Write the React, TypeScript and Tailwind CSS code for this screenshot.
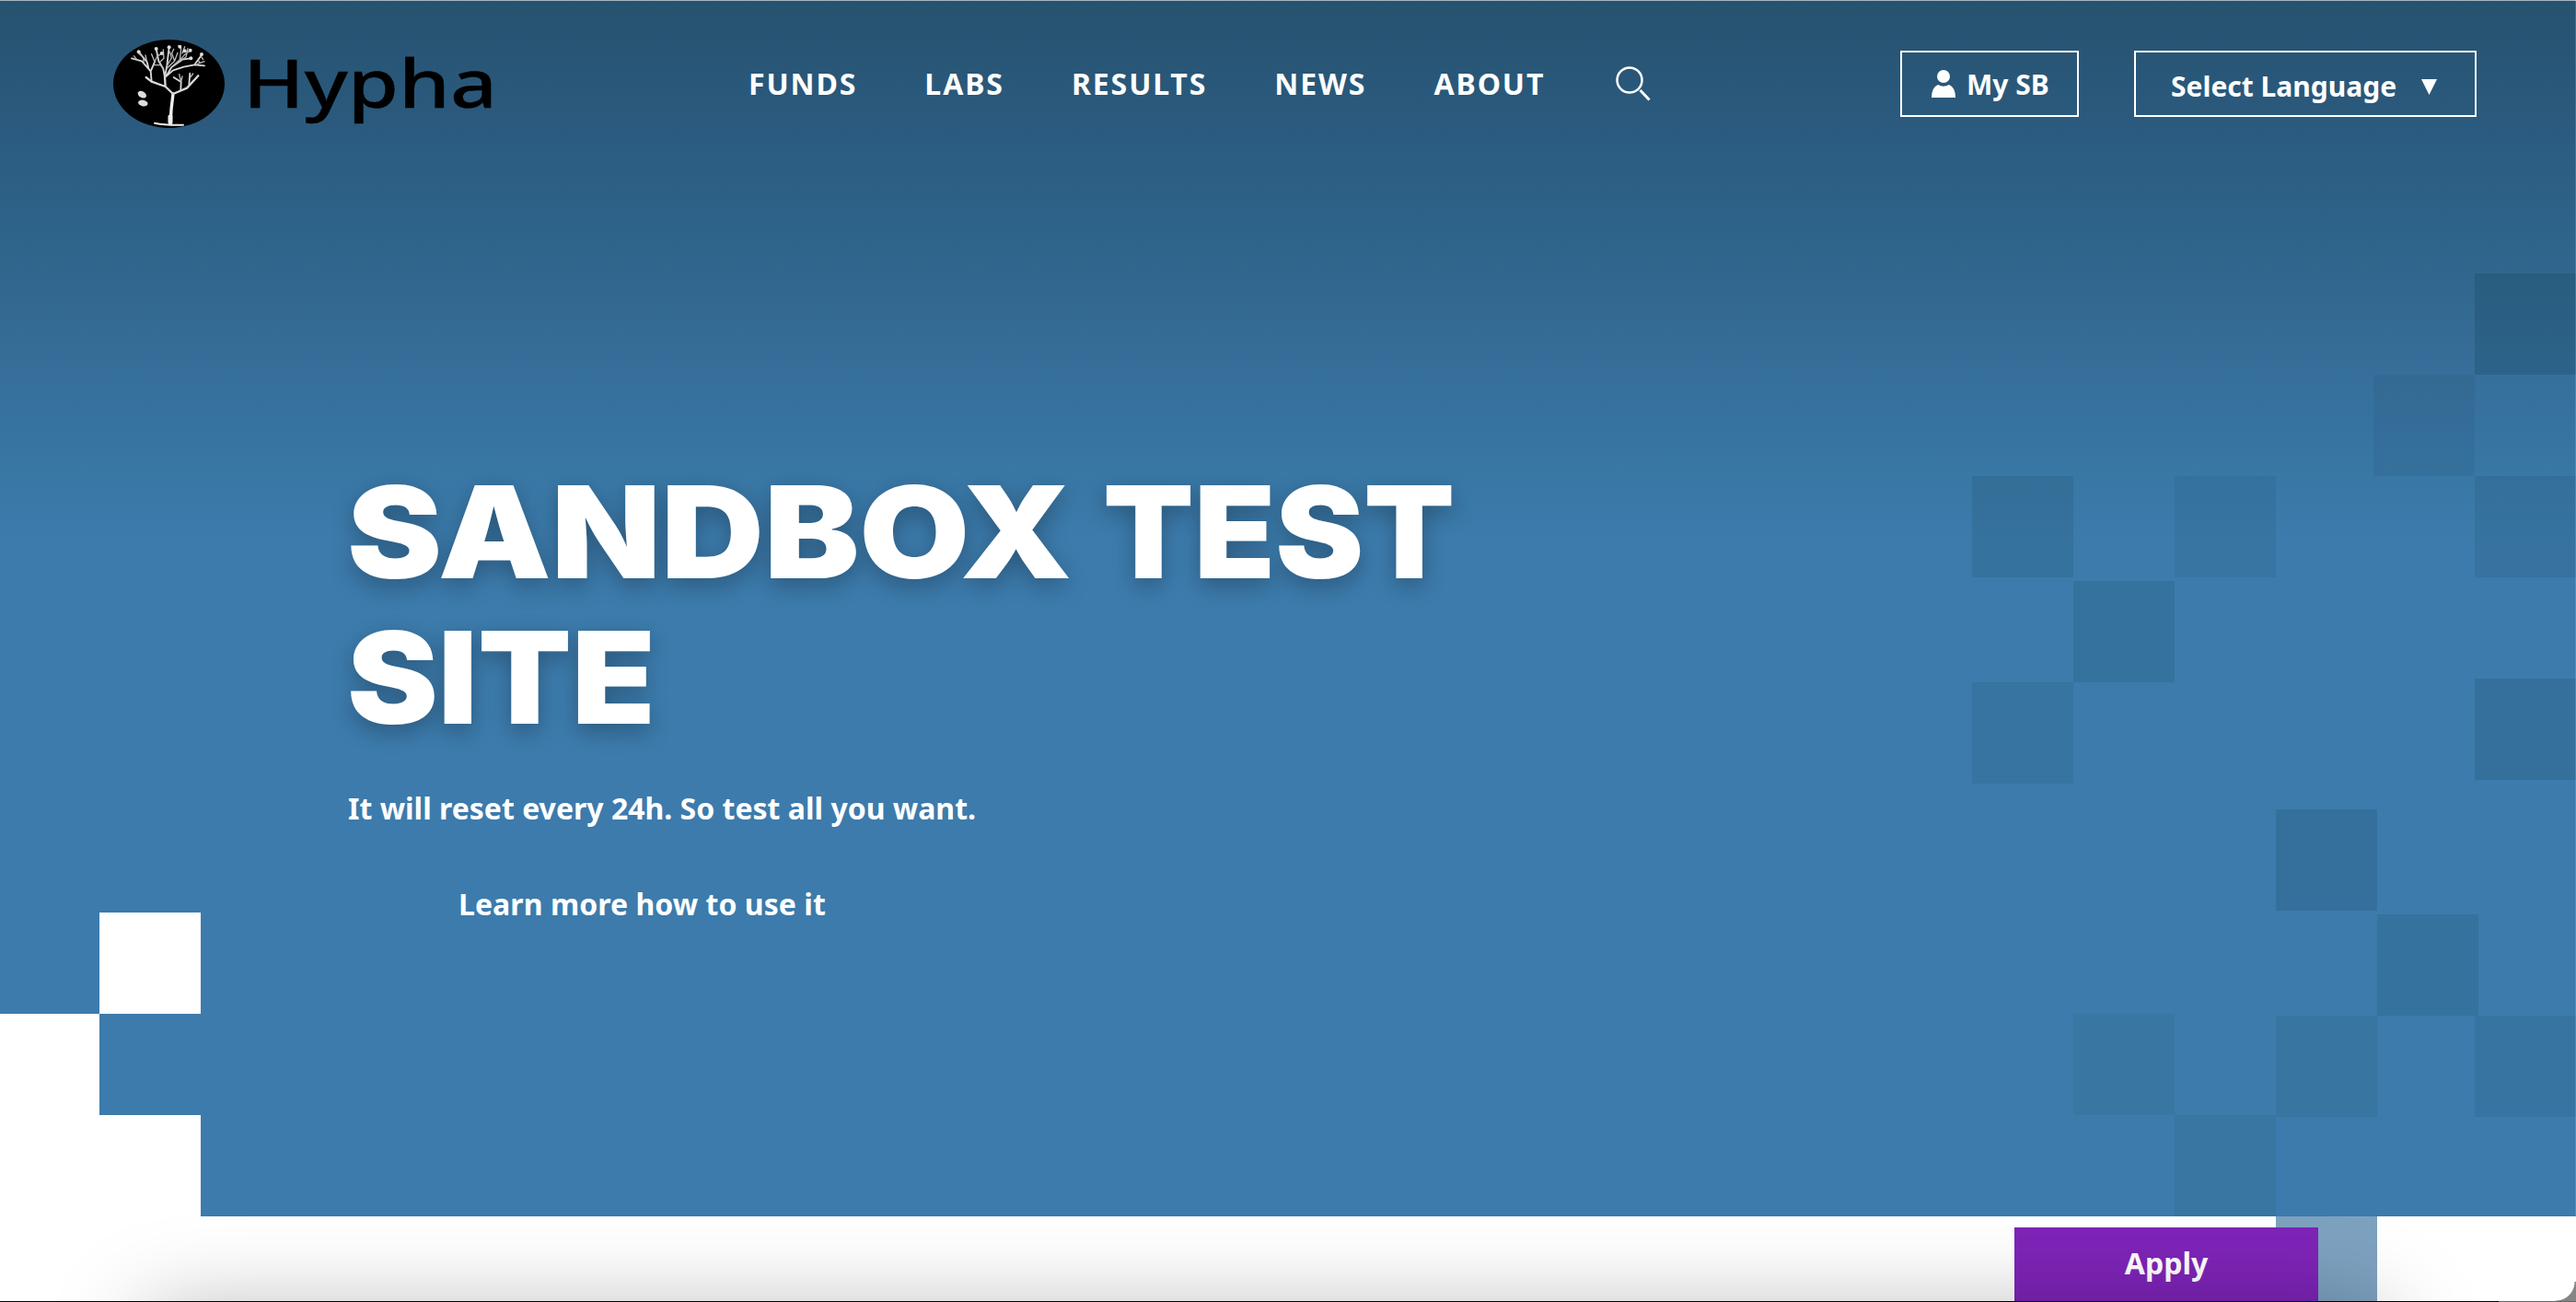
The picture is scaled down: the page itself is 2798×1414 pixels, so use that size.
import React from "react";

const tiles = [
  "left-[2688px] top-[297px] bg-[#0d3b4d]/22",
  "left-[2578px] top-[407px] bg-[#20506a]/14",
  "left-[2142px] top-[517px] bg-[#20506a]/22",
  "left-[2362px] top-[517px] bg-[#20506a]/13",
  "left-[2688px] top-[517px] bg-[#20506a]/18",
  "left-[2252px] top-[631px] bg-[#20506a]/20",
  "left-[2142px] top-[741px] bg-[#20506a]/16",
  "left-[2688px] top-[737px] bg-[#20506a]/24",
  "left-[2472px] top-[879px] bg-[#20506a]/24",
  "left-[2582px] top-[993px] bg-[#20506a]/20",
  "left-[2252px] top-[1101px] bg-[#2a6070]/16",
  "left-[2472px] top-[1103px] bg-[#2a6070]/18",
  "left-[2688px] top-[1103px] bg-[#20506a]/15",
  "left-[2362px] top-[1211px] bg-[#2a6070]/16",
];

const dots = [[98, 55], [155, 45], [173, 60], [197, 40], [232, 38], [268, 76], [303, 63], [266, 50], [248, 52]];

function Logo() {
  return (
    <a className="flex h-[104px] w-[420px] items-center" aria-label="Hypha">
      <svg viewBox="118 38 420 104" className="h-[104px] w-[420px]" fill="none" stroke="#d8d8d8" strokeLinecap="round" strokeLinejoin="round">
        <ellipse cx="183.5" cy="91" rx="60.5" ry="48" fill="#000" stroke="none" />
        <g transform="translate(118 38) scale(0.3333)">
          <path d="M201 290Q203 240 210 192" strokeWidth="10" stroke="#eee" />
          <path d="M150 287Q190 295 243 293" strokeWidth="6" stroke="#eee" />
          <path d="M201 266V284" strokeWidth="15" stroke="#eee" />
          <path d="M210 192L185 168L140 152L122 138M210 192L255 173L292 133M185 168L183 138" strokeWidth="7" />
          <path d="M140 152L137 118L108 85L75 76M137 118L150 88M130 108L125 88L98 55M183 138L178 110L163 85L155 45M183 138L190 100L197 40M187 135L210 115L245 104L280 97L303 65M280 97L312 100M235 178L236 153L212 138M187 135L205 105L240 80L268 76M262 160L265 125" strokeWidth="5.500" />
          <path d="M92 80L82 68M115 92L112 72L98 60M125 88L120 66M150 88L140 62M150 88L158 70L173 60M165 90L180 76L178 48M190 100L205 75L200 55M190 108L215 85L225 58M205 105L232 80L236 45L228 34M222 92L250 62L266 50M235 82L252 72L258 44M240 60L248 38M290 94L312 86M292 82L298 92M236 153L230 128M236 153L240 135M265 140L275 126M178 110L170 98L148 98M215 85L206 60L212 46M300 68L308 80" strokeWidth="4" stroke="#b8b8b8" />
          <g fill="#ddd" stroke="none">
            {dots.map(([x, y]) => <circle key={x} cx={x} cy={y} r="6" />)}
            <ellipse cx="109" cy="194" rx="15" ry="10" transform="rotate(30 109 194)" />
            <ellipse cx="112" cy="222" rx="16" ry="10" transform="rotate(12 112 222)" />
          </g>
        </g>
        <text x="264" y="117" textLength="276" lengthAdjust="spacingAndGlyphs" fill="#000" stroke="#000" strokeWidth="0.300" fontSize="73" fontFamily="'Noto Sans'" fontWeight="500">Hypha</text>
      </svg>
    </a>
  );
}

export default function App() {
  return (
    <div className="relative h-[1414px] w-[2798px] overflow-hidden bg-white font-['Noto_Sans',sans-serif] font-bold text-white">
      <section className="relative h-[1321px] bg-[#3c7bac] bg-[linear-gradient(180deg,#27526f_0px,#2b5b80_150px,#2f658b_270px,#346b94_355px,#366f9b_410px,#3773a1_465px,#3977a5_515px,#3c7bac_590px)]">
        {tiles.map((t) => <i key={t} className={"absolute size-[110px] " + t} />)}
        <i className="absolute left-[108px] top-[991px] size-[110px] bg-white" />
        <i className="absolute left-0 top-[1101px] h-[220px] w-[108px] bg-white" />
        <i className="absolute left-[108px] top-[1211px] size-[110px] bg-white" />
        <i className="absolute left-0 top-0 h-px w-full bg-[#a9b8c2]" />
        <i className="absolute right-0 top-0 h-full w-px bg-white/15" />

        <header className="relative flex h-[180px] items-start pl-[118px] pt-[38px]">
          <Logo />
          <nav className="ml-[275px] mt-[31px] flex h-[44px] items-center gap-[73px] text-[32px] leading-[44px] tracking-[1.900px]">
            <a>FUNDS</a><a>LABS</a><a>RESULTS</a><a>NEWS</a><a>ABOUT</a>
          </nav>
          <svg viewBox="0 0 38 40" className="ml-[77px] mt-[34px] h-[40px] w-[38px]" fill="none" stroke="#fff" strokeWidth="2.500">
            <circle cx="15" cy="15" r="13.500" /><path d="M26.500 26L36.500 36.500" strokeWidth="3" />
          </svg>
          <div className="ml-auto mr-[108px] mt-[17px] flex gap-[60px] text-[30px]">
            <a className="flex h-[72px] w-[194px] items-center border-2 border-white pl-[32px]">
              <svg viewBox="0 0 26 30" className="mr-[12px] h-[30px] w-[26px]" fill="#fff"><circle cx="13" cy="7" r="7" /><path d="M0 30Q0 19 7 16Q13 19.500 19 16Q26 19 26 30Z" /></svg>
              <span>My SB</span>
            </a>
            <a className="flex h-[72px] w-[372px] items-center border-2 border-white pl-[38px] pt-[4px]">
              <span>Select Language</span>
              <svg viewBox="0 0 17 17" className="ml-[27px] mt-[2px] h-[17px] w-[17px]" fill="#fff"><path d="M0 0H17L8.500 17Z" /></svg>
            </a>
          </div>
        </header>

        <div className="ml-[378px] mt-[319px]">
          <h1 className="-ml-px font-['Inter',sans-serif] text-[139px] font-black leading-[158px] [text-shadow:0_8px_24px_rgba(0,0,0,0.28)]">
            <span className="flex whitespace-nowrap">
              <span className="w-[821px]"><span className="inline-block origin-left scale-x-[1.114]">SANDBOX</span></span>
              <span className="inline-block origin-left scale-x-[1.037]">TEST</span>
            </span>
            <span className="block"><span className="inline-block origin-left scale-x-[1.068]">SITE</span></span>
          </h1>
          <p className="mt-[41px] text-[32px] leading-[44px]">It will reset every 24h. So test all you want.</p>
          <a className="ml-[120px] mt-[60px] block text-[32px] leading-[44px] tracking-[0.050px]">Learn more how to use it</a>
        </div>
      </section>
      <div className="relative flex h-[93px]">
        <i className="absolute left-[2472px] top-0 h-[93px] w-[110px] bg-[#7da2c0]" />
        <a className="relative ml-[2188px] mt-[12px] flex h-[81px] w-[330px] items-center justify-center bg-[#7e24b8] pb-[3px] text-[32px]">Apply</a>
      </div>
      <i className="absolute left-[170px] top-[1440px] h-[60px] w-[2410px] shadow-[0_0_100px_10px_rgba(0,0,0,0.34)]" />
      <i className="absolute bottom-0 right-0 size-[22px] bg-[radial-gradient(circle_at_0_0,transparent_20px,#858585_21px)]" />
      <i className="absolute bottom-0 left-0 h-px w-full bg-[#666]" />
      <i className="absolute bottom-0 left-0 h-px w-[2714px] bg-black" />
    </div>
  );
}
